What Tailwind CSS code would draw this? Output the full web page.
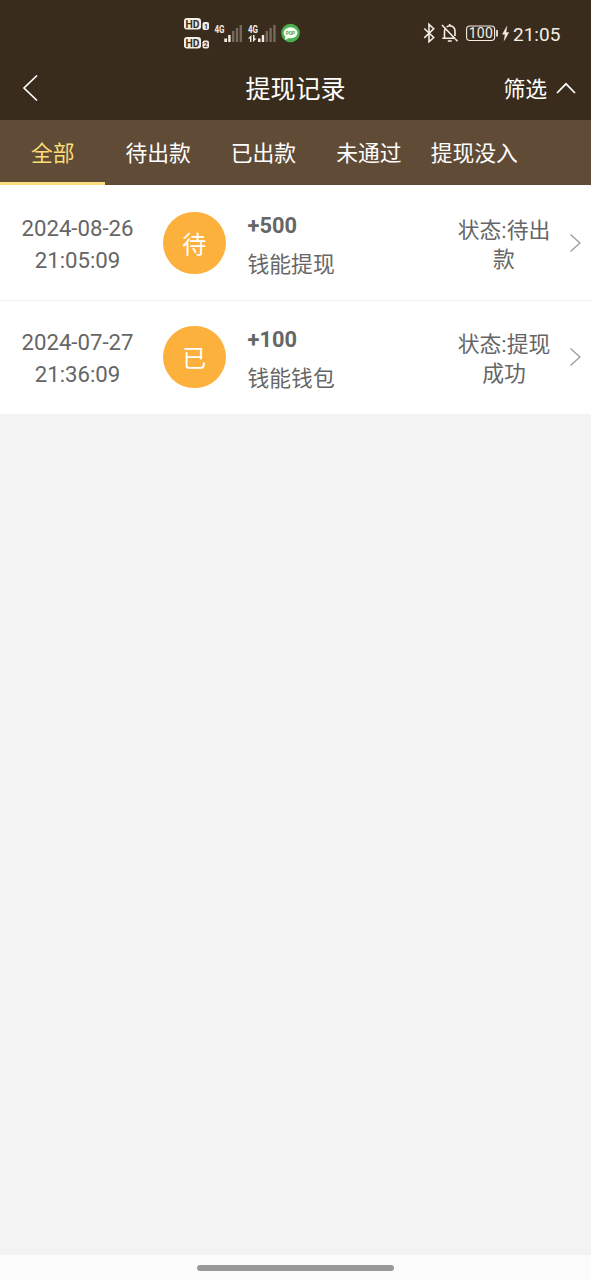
<!DOCTYPE html>
<html lang="zh-CN">
<head>
<meta charset="utf-8">
<meta name="viewport" content="width=device-width, initial-scale=1">
<title>提现记录</title>
<script src="https://cdn.jsdelivr.net/npm/@tailwindcss/browser@4"></script>
</head>
<body class="flex h-[1280px] w-[591px] flex-col overflow-hidden bg-[#f3f3f3] font-[Roboto,'Noto_Sans_CJK_SC',sans-serif] text-[21.8px] text-[#666]">
  <header class="h-[120px] shrink-0 bg-[#3a2c1d] text-white">
    <div class="flex h-14 items-start justify-between pr-[30px] pl-[183px] text-[#f3eee6]">
      <svg class="mt-4 h-9 w-[120px]" viewBox="183 16 120 36" fill="#f3eee6" font-family="Roboto" font-weight="700">
        <rect x="184" y="18" width="17" height="11.5" rx="3"/>
        <text x="185.500" y="27.6" font-size="10.800" textLength="14" lengthAdjust="spacingAndGlyphs" fill="#3a2c1d">HD</text>
        <rect x="202.500" y="22" width="6.500" height="8" rx="2"/>
        <text x="204" y="28.700" font-size="7" fill="#3a2c1d">1</text>
        <rect x="184" y="37" width="17" height="11.5" rx="3"/>
        <text x="185.500" y="46.6" font-size="10.800" textLength="14" lengthAdjust="spacingAndGlyphs" fill="#3a2c1d">HD</text>
        <rect x="202.500" y="40.500" width="6.500" height="8" rx="2"/>
        <text x="203.800" y="47.200" font-size="7" fill="#3a2c1d">2</text>
        <text x="214.500" y="32.500" font-size="10.500" textLength="10" lengthAdjust="spacingAndGlyphs">4G</text>
        <path d="M224.300 38.500h2.700v3.500h-2.700zM228.200 35h2.400v7h-2.400z"/>
        <path fill="#75695b" d="M232 31h2.400v11H232zM235.800 28h2.400v14h-2.400zM239.600 25h2.400v17h-2.400z"/>
        <text x="248" y="32.500" font-size="10.500" textLength="10" lengthAdjust="spacingAndGlyphs">4G</text>
        <path d="M250 42v-3.500h-2l3.400-3.500V42zM253 35h1.500v3.500h2L253 42zM258 38.500h2.500v3.500H258zM261.800 35h2.400v7h-2.400z"/>
        <path fill="#75695b" d="M265.600 31h2.400v11h-2.400zM269.400 28h2.400v14h-2.400zM273.200 25h2.400v17h-2.400z"/>
        <circle cx="290.500" cy="33" r="9.300" fill="#4eaf50"/>
        <ellipse cx="290.500" cy="32.800" rx="7" ry="5.500" fill="#f5fff2"/>
        <path d="M285.500 36l-.5 4 4-2z" fill="#f5fff2"/>
        <text x="286" y="34.800" font-size="5" textLength="9" lengthAdjust="spacingAndGlyphs" fill="#4a9a4c">POP</text>
      </svg>
      <div class="mt-5 flex h-7 items-center">
        <svg class="h-7 w-[90px]" viewBox="423 20 90 28" fill="none" stroke="#f3eee6" stroke-width="1.600">
          <path d="M424.300 28.500l9.400 9-4.700 4.300V24.400l4.700 4.300-9.400 9.200"/>
          <path d="M442.300 38.200h13.200M444.500 38V31.500q0-1.500.7-2.700M446.700 27q1.200-1 3.100-1.200 5.200.5 5.200 5.700v4.500M449.700 25.800V24M447.800 41h4M442 25l15.500 16.300"/>
          <rect x="466.600" y="26" width="28" height="14.500" rx="3.200" stroke-width="1.100"/>
          <path d="M497 30v6.500" stroke-width="1.700"/>
          <path d="M506.800 26.500l-4.300 7.700h2.700l-1 6.300 4.500-8h-2.800z" fill="#f3eee6" stroke="#f3eee6" stroke-width=".5"/>
          <text x="468.800" y="38.200" font-family="Roboto" font-size="14" textLength="24" fill="#f3eee6" stroke="none">100</text>
        </svg>
        <span class="w-[48px] pt-px text-[19px] leading-7 whitespace-nowrap">21:05</span>
      </div>
    </div>
    <div class="grid h-16 grid-cols-[1fr_auto_1fr] items-center">
      <svg class="ml-[22px] h-7 w-4" viewBox="0 0 16 28" fill="none" stroke="#fff" stroke-width="1.700"><path d="M15 1.500L2 14l13 12.500"/></svg>
      <h1 class="pt-[3px] text-[25px] leading-8">提现记录</h1>
      <div class="flex items-center justify-end gap-[9px] pr-[15px]">
        <span class="pt-[3px] leading-8">筛选</span>
        <svg class="h-3 w-5" viewBox="0 0 20 12" fill="none" stroke="#fff" stroke-width="1.700"><path d="M1 11l9-9.200L19 11"/></svg>
      </div>
    </div>
  </header>
  <nav class="flex h-[65px] shrink-0 bg-[#604b36] text-center leading-[67px] whitespace-nowrap text-white">
    <div class="h-[65px] w-[105.400px] border-b-[3px] border-[#fbdb7e] text-[#fbdc78]">全部</div>
    <div class="w-[105.400px]">待出款</div>
    <div class="w-[105.400px]">已出款</div>
    <div class="w-[105.400px]">未通过</div>
    <div class="w-[105.400px]">提现没入</div>
  </nav>
  <main class="flex-1">
    <div class="flex h-[116px] items-center border-b border-[#f1f1f1] bg-white pt-px">
      <div class="w-[155px] pt-px text-center text-[22.2px] leading-8">2024-08-26<br>21:05:09</div>
      <div class="ml-2 flex size-[62.500px] items-center justify-center rounded-full bg-[#fcb13d] pt-[3px] text-[24px] text-white">待</div>
      <div class="ml-[22px] flex-1 pt-[3px]"><div class="leading-[39px] font-bold">+500</div><div class="leading-[39px]">钱能提现</div></div>
      <div class="w-[96px] pt-[3px] text-center leading-[29px]">状态:待出<br>款</div>
      <svg class="mr-[10px] ml-[17px] h-5 w-3" viewBox="0 0 12 20" fill="none" stroke="#999" stroke-width="1.200"><path d="M1.500 1.500L11 10l-9.500 8.500"/></svg>
    </div>
    <div class="flex h-[113px] items-center bg-white pb-px">
      <div class="w-[155px] pt-px text-center text-[22.2px] leading-8">2024-07-27<br>21:36:09</div>
      <div class="ml-2 flex size-[62.500px] items-center justify-center rounded-full bg-[#fcb13d] pt-[3px] text-[24px] text-white">已</div>
      <div class="ml-[22px] flex-1 pt-[3px]"><div class="leading-[39px] font-bold">+100</div><div class="leading-[39px]">钱能钱包</div></div>
      <div class="w-[96px] pt-[3px] text-center leading-[29px]">状态:提现<br>成功</div>
      <svg class="mr-[10px] ml-[17px] h-5 w-3" viewBox="0 0 12 20" fill="none" stroke="#999" stroke-width="1.200"><path d="M1.500 1.500L11 10l-9.500 8.500"/></svg>
    </div>
  </main>
  <footer class="flex h-[25px] shrink-0 items-center justify-center bg-[#fcfcfc]"><div class="h-1.5 w-[197px] rounded-full bg-[#999]"></div></footer>
</body>
</html>
